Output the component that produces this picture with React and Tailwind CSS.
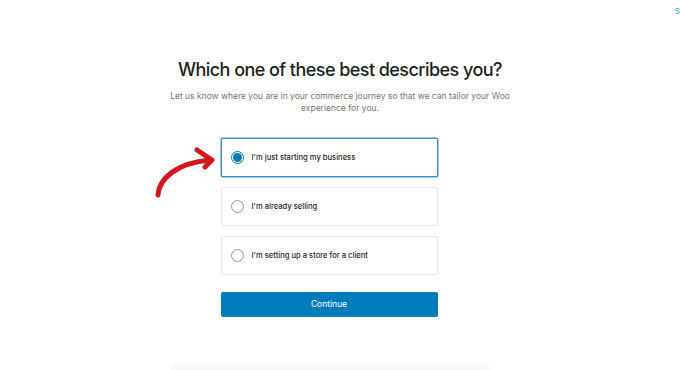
import { useState } from "react";

const options = [
  "I'm just starting my business",
  "I'm already selling",
  "I'm setting up a store for a client",
];

export default function App() {
  const [selected, setSelected] = useState(0);

  return (
    <div className="relative w-[680px] h-[370px] overflow-hidden bg-white font-['Inter','Liberation_Sans',sans-serif]">
      <span className="absolute top-[6px] right-0 text-[8px] leading-[10px] text-[#3399dd]">S</span>

      <div className="flex flex-col items-center pt-[57px]">
        <h1 className="text-[18px] leading-[26px] font-medium text-[#1e1e1e] tracking-[-0.55px]">
          Which one of these best describes you?
        </h1>
        <p className="mt-[7px] w-[360px] text-center text-[8.5px] leading-[12px] text-[#757575]">
          Let us know where you are in your commerce journey so that we can tailor your Woo
          experience for you.
        </p>

        <div className="relative mt-[24px] mr-[22px] w-[217px] flex flex-col gap-[10px]">
          {/* red hand-drawn arrow pointing at the first option */}
          <svg
            className="absolute left-[-76px] top-[1px]"
            width="70"
            height="62"
            viewBox="145 140 70 62"
            fill="none"
          >
            <path
              d="M158 196 C 159 180, 176 164, 210 161"
              stroke="#d4171d"
              strokeWidth="5"
              strokeLinecap="round"
            />
            <path
              d="M197 151 L 212 161 L 205 168"
              stroke="#d4171d"
              strokeWidth="5"
              strokeLinecap="round"
              strokeLinejoin="round"
            />
          </svg>

          {options.map((label, i) => {
            const active = selected === i;
            return (
              <button
                key={label}
                type="button"
                onClick={() => setSelected(i)}
                className={`flex items-center h-[39px] px-[9px] gap-[8px] rounded-[2px] bg-white text-left ${
                  active
                    ? "border border-[#3a8fd0] shadow-[0_0_0_0.5px_#3a8fd0]"
                    : "border border-[#e6e6e6]"
                }`}
              >
                <span
                  className={`flex items-center justify-center w-[13px] h-[13px] rounded-full border ${
                    active ? "border-[#007cba]" : "border-[#949494]"
                  }`}
                >
                  {active && <span className="w-[9px] h-[9px] rounded-full bg-[#007cba]" />}
                </span>
                <span className="text-[7.6px] font-medium text-[#1e1e1e]">{label}</span>
              </button>
            );
          })}

          <button
            type="button"
            className="mt-[7px] h-[25px] rounded-[2px] bg-[#007cba] text-white text-[8.5px]"
          >
            Continue
          </button>
        </div>

        <div className="mt-[47px] mr-[20px] w-[320px] h-[10px] rounded-full bg-[#f8f8f8] blur-[2px]" />
      </div>
    </div>
  );
}
